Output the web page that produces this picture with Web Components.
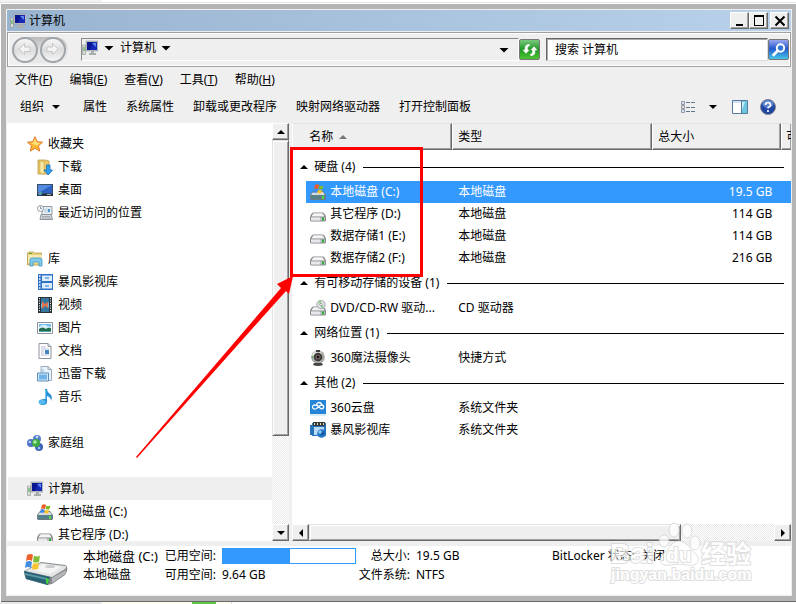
<!DOCTYPE html>
<html lang="zh-CN">
<head>
<meta charset="utf-8">
<title>计算机</title>
<style>
html,body{margin:0;height:100%}
body{font:12px/16px "Noto Sans","Noto Sans CJK SC",sans-serif;color:#000;background:#fff;overflow:hidden}
</style>
</head>
<body>
<desktop-page></desktop-page>
<script>
const define=(name,html,init)=>{
  const t=document.createElement('template');
  t.innerHTML='<style>*{box-sizing:border-box}button{font:inherit;color:inherit;border:0;padding:0;margin:0;background:none;white-space:nowrap}</style>'+html;
  customElements.define(name,class extends HTMLElement{
    constructor(){super();this.attachShadow({mode:'open'}).append(t.content.cloneNode(true));}
    connectedCallback(){if(init&&!this.ready){this.ready=true;init(this,this.shadowRoot);}}
  });
};

const DRIVE='<path d="M3.500 6.500h9q1.500 0 2.500 2l1 2v4l-1 1H1l-1-1v-4l1-2q1-2 2.500-2z" fill="#8b8b8f"/><path d="M4 7.300h8q1 0 2.500 3.200h-13Q3 7.300 4 7.300z" fill="#f4f4f6"/><path d="M1 11.500h14v3H1z" fill="#c3c4ca"/><path d="M1 11.500h9v3H1z" fill="#e6e8eb"/><path d="M12 11.500h2v3h-2z" fill="#2fae35"/>';
const FLAG='<path d="M5 1q2-1.500 4 0L8 5Q6 4 4 5z" fill="#ee5a24"/><path d="M9.500 1.500q2 1 4 0L12.500 5q-2 1-4 0z" fill="#7cbc2c"/><path d="M3.700 5.500q2-1 4 0L6.800 9q-2-1-4 0z" fill="#3f8be6"/><path d="M8.200 5.800q2 1 4 0L11.300 9q-2 1-4 0z" fill="#fcc32a"/>';
const ICONS={
computer:'<path d="M.500 5h3v9.500h-3z" fill="#d8dad8" stroke="#8c9090" stroke-width=".6"/><path d="M2 7v4" stroke="#39a83b"/><path d="M4 1h12v10H4z" fill="#c4c8ca" stroke="#8d9295" stroke-width=".6"/><path d="M5 2h10v8H5z" fill="#1528b8"/><path d="M5 2h6l-3 8H5z" fill="#0a1690"/><path d="M10 3h4v4z" fill="#6189ea"/><path d="M9 11h3v2h2v2H7v-2h2z" fill="#a9aead"/>',
star:'<path d="M8 .7l2.200 5 5.300.5-4 3.600 1.200 5.300L8 12.300 3.300 15.100l1.200-5.300-4-3.600 5.300-.5z" fill="#ffb733" stroke="#e0792b"/><path d="M8 2.500l1.500 4 3.800.4-3 2.400L8 9 4 7l2.500-.5z" fill="#ffe27b"/>',
download:'<path d="M1 1h7l4 1v13H1z" fill="#e9c866" stroke="#b8923d" stroke-width=".7"/><path d="M3 1.500l4 2v12l-4-2z" fill="#f9e9a6" stroke="#c9a64d" stroke-width=".6"/><path d="M9.500 6h3.500v5h2.500L11.200 16 7 11h2.500z" fill="#31a0ef" stroke="#1669b4" stroke-width=".8"/>',
desktop:'<path d="M0 2h16v12H0z" fill="#3a4d66"/><path d="M1 3h14v8H1z" fill="#2b62c4"/><path d="M1 3h14L3 10H1z" fill="#528be0"/><path d="M0 12h16v2H0z" fill="#26303e"/><circle cx="3" cy="11.500" r="2" fill="#3e9ae0"/><path d="M2 10.500h1v1H2z" fill="#f35325"/><path d="M3 10.500h1v1H3z" fill="#81bc06"/><path d="M10 12.500h4" stroke="#9daab8"/>',
recent:'<path d="M5 1.500h10v8H5z" fill="#e9eef4" stroke="#929aa4"/><path d="M7 3.500h6v4H7z" fill="#c8dcec"/><path d="M11 4h2v3h-2z" fill="#4a96cc"/><path d="M4 9.500h10l1.500 5H3z" fill="#d6d9dc" stroke="#8d949b"/><path d="M5 11.500h8M5 13h9" stroke="#a5acb3"/><circle cx="3.500" cy="3.500" r="3" fill="#fafafa" stroke="#969ca3"/><path d="M3.500 1.500v2h1.500" fill="none" stroke="#56789a" stroke-width=".8"/>',
library:'<path d="M.5 2l1-1h5l1 1h7v12H.5z" fill="#e9d27c" stroke="#b79b4b" stroke-width=".8"/><path d="M1 4h14v8H1z" fill="#f7eab1"/><path d="M2 2.500h3" stroke="#58a832"/><path d="M3 15V9q0-2 2-2h8q2 0 2 2v6h-3v-4H6v4z" fill="#80cbed" stroke="#3f95c5" stroke-width=".8"/>',
film:'<path d="M1 0h15v16H1z" fill="#2f70c8"/><path d="M5 1.500h10V7H5zM5 9h10v5.500H5z" fill="#deedfa"/><path d="M2 2h1.500M2 5h1.500M2 8h1.500M2 11h1.500M2 14h1.500" stroke="#fff" stroke-width="1.300"/><path d="M8 3h4v2H8zM8 11h4v2H8z" fill="#7eb4e9"/>',
video:'<path d="M1 0h14v16H1z" fill="#293036"/><path d="M4 1h8v14H4z" fill="#72bce8"/><path d="M4 1h8v4L8 8l4 3v4H4v-4l3-2-3-3z" fill="#36759e"/><path d="M5 4l3 3 3-2v6L8 9l-3 3z" fill="#de7550"/><path d="M2.500 1v14M13.500 1v14" stroke="#dce5e7" stroke-dasharray="1.200 1.200"/>',
picture:'<path d="M.5 2.500h15v11H.5z" fill="#fff" stroke="#8b9299"/><path d="M2 4h12v8H2z" fill="#74bceb"/><path d="M2 7q5-4 8-1l4 1v3H2z" fill="#d7eefa"/><path d="M2 9q3-3 7 0 2-2 5-1v4H2z" fill="#256e4b"/><path d="M2 11h12v1H2z" fill="#50a1af"/>',
document:'<path d="M2 .5h9l3 3v12H2z" fill="#fff" stroke="#8e969e"/><path d="M11 .5v3h3" fill="#dbe2e8" stroke="#8e969e"/><path d="M4 4h5M4 6h8M4 8h3M4 10h3M4 12h8" stroke="#a3b1d4" stroke-width=".8"/><path d="M8 7h4v4H8z" fill="#4386c2"/>',
thunder:'<path d="M4 .5h7l3.500 3v11H4z" fill="#e9f2fb" stroke="#9aacbd"/><path d="M11 .5v3h3.500" fill="none" stroke="#9aacbd"/><path d="M.5 7h11v8H.5z" fill="#d7eafa" stroke="#5a8db9"/><path d="M2 8.500h8v5H2z" fill="#6eb3e8"/><path d="M6 3v4" stroke="#85b3db"/>',
music:'<path d="M8 0h2q0 3 3 5 3 2 1 7 0-4-4-5v6q0 3-4 3-4 0-4-3 0-3 6-3z" fill="#2590d5"/><ellipse cx="5" cy="13" rx="3.500" ry="2.300" fill="#56baf0"/><path d="M8.700 1v9" stroke="#7acff7"/>',
home:'<circle cx="10" cy="4" r="4" fill="#5680cc"/><circle cx="4" cy="8" r="4" fill="#4e72c4"/><circle cx="12" cy="12" r="4" fill="#3c65b8"/><circle cx="9" cy="8" r="4" fill="#3fac43"/><circle cx="8" cy="7" r="1.700" fill="#b2eaa8"/><circle cx="2.800" cy="7" r="1.300" fill="#b8d0f6"/><circle cx="10" cy="2" r="1.300" fill="#c3dafa"/><circle cx="12" cy="13" r="1.300" fill="#9abef1"/>',
windrive:'<path d="M3 7h10l3 4v4l-1 1H1l-1-1v-4z" fill="#6d7a80"/><path d="M3 8h10l2 3H1z" fill="#d5dcdf"/><path d="M1 11.500h14V15H1z" fill="#53828c"/><path d="M12 12h2v3h-2z" fill="#4cdc3f"/>'+FLAG,
drive:DRIVE,
optical:DRIVE+'<circle cx="11" cy="4.500" r="4.200" fill="#dce2e1" stroke="#8d9292" stroke-width=".7"/><path d="M11 4.500L8 2q1-1.500 3-1.500zM11 4.500l3 2.500q-1 1-3 1z" fill="#8bd58c"/><circle cx="11" cy="4.500" r="1.200" fill="#fff" stroke="#777" stroke-width=".6"/>',
camera:'<circle cx="8" cy="7" r="6.800" fill="#a6a8a4"/><circle cx="7" cy="5" r="4.800" fill="#dddeda"/><circle cx="8" cy="7" r="4.300" fill="#3b3938"/><circle cx="8" cy="7" r="2.500" fill="#7b6767"/><circle cx="8" cy="7" r="1.400" fill="#171717"/><path d="M6 0h4v2H6z" fill="#40403d"/><path d="M1.500 7h2" stroke="#44aa43" stroke-width="1.500"/><path d="M4 13h8l1 2q-5 2-10 0z" fill="#464542"/>',
cloud:'<path d="M0 0h16v16H0z" fill="#2785d7"/><path d="M0 14h16v2H0z" fill="#dcecf7"/><path d="M12 4.500Q10 1.500 7.500 3 6 4 7.500 5.500L10 8q2 1.500 3.300 0Q14.500 5.500 12 5q-1.500 0-3 1.500L6.500 8.500Q4 10 2.700 8 2 5.500 4.500 4.800q1.200 0 2 .9" fill="none" stroke="#fff" stroke-width="1.300"/>',
filmball:'<path d="M0 3h3v10H0z" fill="#2774b9"/><path d="M2 1h14v13H2z" fill="#2774b9"/><path d="M3 0h12v4H3z" fill="#333b3f"/><path d="M4 1h1v2H4zM7 1h1v2H7zM10 1h1v2h-1zM13 1h1v2h-1z" fill="#f2d9b0"/><path d="M4 5h10v8H4z" fill="#b8daf3"/><circle cx="11.500" cy="11.500" r="4.300" fill="#2278c6"/><circle cx="10" cy="10" r="1.700" fill="#8ccbf3"/><path d="M10 14l3-5 2 3z" fill="#1755a1"/>',
back:'<path d="M7.500 1.500L2 7l5.500 5.500v-3H13V5H7.500z" fill="#f3f3f3" stroke="#c7c7c7"/>',
forward:'<path d="M7.500 1.500L13 7l-5.500 5.500v-3H2V5h5.500z" fill="#f3f3f3" stroke="#c7c7c7"/>',
refresh:'<path d="M4 12L0 7.500h2.500V6q0-4 5-4.500l1 2.500Q6 4 6 6v1.500h2z" fill="#f7fff5" stroke="#278c2a" stroke-width=".5"/><path d="M12 4L8 8.500h2V10q0 2-2.500 2l1 2.500q5-.5 5-4.500V8.500H16z" fill="#f7fff5" stroke="#278c2a" stroke-width=".5"/>',
search:'<circle cx="9.500" cy="6" r="3.700" fill="#3177d5" stroke="#fff" stroke-width="2"/><path d="M6.700 8.800L2.500 13" stroke="#fff" stroke-width="2.700" stroke-linecap="round"/>',
list:'<path d="M1.500 2.500h3v3h-3zM1.500 6.500h3v3h-3zM1.500 10.500h3v3h-3z" fill="#fff" stroke="#8c9aaa"/><path d="M2.500 4h1M2.500 12h1" stroke="#568bb8"/><path d="M2.500 8h1" stroke="#d54b32"/><path d="M6 3.500h4m1 0h4M6 8.500h4m1 0h4M6 12.500h4m1 0h4" stroke="#66768b"/>',
preview:'<path d="M.5 1.500h15v13H.5z" fill="#fff" stroke="#557a9e"/><path d="M1 2h14v2H1z" fill="#d4e3ef"/><path d="M9.500 2v12" stroke="#557a9e"/><path d="M10 2h5v12h-5z" fill="#6cc5df"/><path d="M10 3l3 0-3 8z" fill="#c2eef4"/>',
help:'<circle cx="8" cy="8" r="7.500" fill="#1e459f" stroke="#81858e"/><ellipse cx="8" cy="5" rx="5.500" ry="4" fill="#5b83d5"/><path d="M5.500 6q0-2.500 2.500-2.500T10.500 6q0 1-1.200 1.800Q8 8.500 8 9.500" fill="none" stroke="#fff" stroke-width="1.700"/><circle cx="8" cy="12" r="1.100" fill="#fff"/>',
down:'<path d="M3.500 6h9L8 10.500z"/>',
smalldown:'<path d="M4 6h8l-4 4z"/>',
up:'<path d="M4 10h8L8 6z"/>',left:'<path d="M10 4v8L6 8z"/>',right:'<path d="M6 4v8l4-4z"/>',
sort:'<path d="M4 10h8L8 6z" fill="#777"/>',
min:'<path d="M4 11h7v2H4z"/>',
max:'<path d="M3 2h10v11H3zM4 4v8h8V4z" fill-rule="evenodd"/>',
close:'<path d="M3.500 3.500l9 9M12.500 3.500l-9 9" stroke="#000" stroke-width="2"/>',
bigdrive:'<path d="M0 18l17-9 24 3q3 1 2 6l-2 4-13 9-5 1L2 26q-2-4-2-8z" fill="#85898b"/><path d="M1 18l16-8 24 3q2 1 0 3L28 24z" fill="#e3e5e6"/><path d="M9 17l10-6 18 3-11 7z" fill="#f5f5f5"/><ellipse cx="26" cy="13.500" rx="5" ry="1.500" fill="#cacdce"/><path d="M0 18l26 6-2 8-22-6z" fill="#286275"/><path d="M1 20l22 5v2L1 22z" fill="#5b96a4"/><path d="M22 25l3 1-1 5-2-1z" fill="#45d238"/><path d="M28 25l14-8-1 4-13 9z" fill="#b4b8ba"/><path d="M3 2q4-2 6 0L8 8q-3-2-6 0z" fill="#ed622b"/><path d="M10 2.500q3 2 6 0L15 9q-3 1-6 0z" fill="#82bd37"/><path d="M2 9q3-2 6 0l-1 6q-3-2-6 0z" fill="#438ee3"/><path d="M9 10q3 1 6 0l-1 6q-3 1-6 0z" fill="#fac331"/>'
};
define('ui-icon','<style>:host{display:block;flex:none;width:16px;height:16px}svg{display:block;width:100%;height:100%}:host([name=bigdrive]){width:44px;height:34px}</style>',
(h,r)=>{const n=h.getAttribute('name');r.innerHTML+=`<svg aria-hidden="true" viewBox="${n==='bigdrive'?'0 0 44 34':'0 0 16 16'}">${ICONS[n]}</svg>`;});

define('bevel-button','<style>:host{display:block;flex:none;width:17px;height:17px}button{display:grid;place-items:center;overflow:hidden;width:100%;height:100%;background:#efefef;border:1px solid;border-color:#fff #696969 #696969 #fff;box-shadow:inset -1px -1px #a0a0a0}</style><button><slot></slot></button>',
(h,r)=>r.querySelector('button').setAttribute('aria-label',h.getAttribute('label')));

define('title-bar',`<style>:host{display:flex;align-items:center;height:21px;padding:0 2px 0 3px;gap:3px;background:linear-gradient(90deg,#99b4d1,#b9d1ea)}
h1{font:inherit;margin:0;flex:1}nav{display:flex}bevel-button{width:19px}bevel-button:last-child{margin-left:2px}</style>
<ui-icon name="computer"></ui-icon><h1>计算机</h1><nav><bevel-button label="最小化"><ui-icon name="min"></ui-icon></bevel-button><bevel-button label="最大化"><ui-icon name="max"></ui-icon></bevel-button><bevel-button label="关闭"><ui-icon name="close"></ui-icon></bevel-button></nav>`);

define('address-bar',`<style>:host{display:flex;align-items:center;height:35px;margin-top:1px;padding:0 1px 0 4px;border:1px solid #a0a0a0;box-shadow:inset 1px 1px #fff,inset -1px -1px #fff}
.nav{display:flex;gap:2px;padding-right:2px;border-radius:14px;background:linear-gradient(#bbb,#e8e8e8 60%)}
.nav button{width:26px;height:26px;display:grid;place-items:center;border-radius:50%;border:2px solid #a0a5aa;background:linear-gradient(#f7f7f7,#dcdcdc 50%,#f5f5f5)}
.path,.find{display:flex;align-items:center;height:23px;border:1px solid;border-color:#8a8a8a #fff #fff #8a8a8a}
.path{flex:1;margin-left:13px;padding:0 6px 0 0}.path button{display:flex;align-items:center;gap:2px;padding-bottom:4px}.path button+button{margin-left:3px}.end{margin-left:auto!important;padding:0!important}
.tool{display:grid;place-items:center;flex:none;width:21px;height:21px;border:1px solid #777;border-radius:2px}
.go{background:linear-gradient(#7bc87f,#1e9b23 50%,#4dc430)}.look{background:linear-gradient(#9ca8ee,#245acf 45%,#42c6e9)}
.find{flex:0 0 222px;margin:0 0 0 6px;background:#fff;border-color:#666 #ddd #ddd #666;box-shadow:inset 1px 1px #aaa}
input{font:inherit;width:100%;border:0;outline:0;background:none;padding:0 8px}</style>
<div class="nav"><button aria-label="后退"><ui-icon name="back"></ui-icon></button><button aria-label="前进"><ui-icon name="forward"></ui-icon></button></div>
<div class="path"><button aria-label="位置"><ui-icon name="computer"></ui-icon></button><button aria-label="展开"><ui-icon name="down"></ui-icon></button><button>计算机<ui-icon name="down"></ui-icon></button><button class="end" aria-label="历史"><ui-icon name="down"></ui-icon></button></div>
<button class="tool go" aria-label="刷新"><ui-icon name="refresh"></ui-icon></button>
<div class="find"><input aria-label="搜索" value="搜索 计算机"></div><button class="tool look" aria-label="开始搜索"><ui-icon name="search"></ui-icon></button>`);

define('menu-bar',`<style>:host{display:flex;align-items:center;height:26px;padding:0 8px;gap:17px}</style>
<button>文件(<u>F</u>)</button><button>编辑(<u>E</u>)</button><button>查看(<u>V</u>)</button><button>工具(<u>T</u>)</button><button>帮助(<u>H</u>)</button>`);

define('command-bar',`<style>:host{display:flex;align-items:center;height:30px;padding:0 15px 3px 13px;gap:19px}button{display:flex;align-items:center;gap:4px}.view{margin-left:auto;gap:9px}.view+button{margin-left:-8px}button:last-child{margin-left:-7px}</style>
<button>组织<ui-icon name="smalldown"></ui-icon></button><button>属性</button><button>系统属性</button><button>卸载或更改程序</button><button>映射网络驱动器</button><button>打开控制面板</button>
<button class="view" aria-label="更改视图"><ui-icon name="list"></ui-icon><ui-icon name="smalldown"></ui-icon></button><button aria-label="预览窗格"><ui-icon name="preview"></ui-icon></button><button aria-label="帮助"><ui-icon name="help"></ui-icon></button>`);

define('scroll-bar',`<style>:host{display:flex;flex:none;flex-direction:column;width:17px;background:repeating-conic-gradient(#fff 0 25%,#e9e9e9 0 50%) 0 0/2px 2px}
:host([horizontal]){flex-direction:row;width:auto;height:17px}.space{flex:1;display:flex;flex-direction:inherit;min-height:0}
.thumb{background:#efefef;border:1px solid;border-color:#e3e3e3 #696969 #696969 #e3e3e3;box-shadow:inset 1px 1px #fff,inset -1px -1px #a0a0a0;flex:0 0 var(--part)}</style>
<bevel-button><ui-icon></ui-icon></bevel-button><div class="space"><div class="thumb"></div></div><bevel-button><ui-icon></ui-icon></bevel-button>`,
(h,r)=>{const z=h.hasAttribute('horizontal');const n=z?['left','right']:['up','smalldown'];const l=z?['向左','向右']:['向上','向下'];
r.querySelectorAll('bevel-button').forEach((b,i)=>{const c=document.createElement('ui-icon');c.setAttribute('name',n[i]);b.shadowRoot.querySelector('button').setAttribute('aria-label',l[i]);b.replaceChildren(c);});});

define('nav-item',`<style>:host{display:block}a{display:flex;align-items:center;height:23px;gap:5px;padding-left:19px;margin-left:1px;color:inherit;text-decoration:none;white-space:nowrap}
:host([child]) a{padding-left:29px}:host([last]){margin-bottom:23px}:host([current]) a{background:#efefef}</style><a href="#"><ui-icon></ui-icon><slot></slot></a>`,
(h,r)=>{const c=document.createElement('ui-icon');c.setAttribute('name',h.getAttribute('icon'));r.querySelector('ui-icon').replaceWith(c);});

define('nav-pane',`<style>:host{display:flex;flex:none;width:36%;min-height:0;background:#fff}nav{flex:1;padding-top:9px;overflow:hidden}scroll-bar{--part:77%}</style>
<nav><nav-item icon="star">收藏夹</nav-item><nav-item child icon="download">下载</nav-item><nav-item child icon="desktop">桌面</nav-item><nav-item child last icon="recent">最近访问的位置</nav-item>
<nav-item icon="library">库</nav-item><nav-item child icon="film">暴风影视库</nav-item><nav-item child icon="video">视频</nav-item><nav-item child icon="picture">图片</nav-item><nav-item child icon="document">文档</nav-item><nav-item child icon="thunder">迅雷下载</nav-item><nav-item child last icon="music">音乐</nav-item>
<nav-item last icon="home">家庭组</nav-item><nav-item current icon="computer">计算机</nav-item><nav-item child icon="windrive">本地磁盘 (C:)</nav-item><nav-item child icon="drive">其它程序 (D:)</nav-item></nav><scroll-bar></scroll-bar>`);

const GROUPS=[
['硬盘 (4)',['windrive','本地磁盘 (C:)','本地磁盘','19.5 GB'],['drive','其它程序 (D:)','本地磁盘','114 GB'],['drive','数据存储1 (E:)','本地磁盘','114 GB'],['drive','数据存储2 (F:)','本地磁盘','216 GB']],
['有可移动存储的设备 (1)',['optical','DVD/CD-RW 驱动...','CD 驱动器','']],
['网络位置 (1)',['camera','360魔法摄像头','快捷方式','']],
['其他 (2)',['cloud','360云盘','系统文件夹',''],['filmball','暴风影视库','系统文件夹','']]];
define('file-list',`<style>:host{display:flex;flex-direction:column;flex:1;min-width:0;background:#fff}.view{flex:1;min-height:0;overflow:hidden}
table{width:100%;table-layout:fixed;border-collapse:separate;border-spacing:0}td,th{padding:0;font-weight:400;text-align:left;white-space:nowrap;overflow:hidden}
th{height:27px;padding-left:5px;background:#efefef;border:1px solid;border-color:#e3e3e3 #696969 #696969 #fff;box-shadow:inset -1px -1px #a0a0a0}
th:first-child{padding-left:16px}th:last-child{border-right:0;padding-left:4px}th div{display:flex;align-items:center;gap:2px}
tbody td{height:22px}tbody:first-of-type:before{content:"";display:table-row;height:3px}
.group td{height:28px}.group div{display:flex;align-items:center;padding:0 7px 0 4px;gap:2px}.group i{flex:1;height:1px;margin-left:6px;background:#000}
.name{display:flex;align-items:center;gap:4px;padding-left:4px}.type{padding-left:6px}.size{text-align:right;padding-right:9px}
.on td:not(:first-child){background:#3399ff;color:#fff}scroll-bar{--part:80%}</style>
<div class="view"><table><colgroup><col style="width:14px"><col style="width:146px"><col style="width:200px"><col style="width:129px"><col></colgroup>
<thead><tr><th colspan="2"><div>名称<ui-icon name="sort"></ui-icon></div></th><th>类型</th><th>总大小</th><th>可</th></tr></thead></table></div><scroll-bar horizontal></scroll-bar>`,
(h,r)=>{r.querySelector('table').insertAdjacentHTML('beforeend',GROUPS.map(([g,...rows],a)=>`<tbody><tr class="group"><td colspan="5"><div><ui-icon name="up"></ui-icon>${g}<i></i></div></td></tr>`+
rows.map((x,b)=>`<tr${a+b?'':' class="on"'}><td></td><td><div class="name"><ui-icon name="${x[0]}"></ui-icon>${x[1]}</div></td><td class="type">${x[2]}</td><td class="size">${x[3]}</td><td></td></tr>`).join('')+'</tbody>').join(''));});

define('details-pane',`<style>:host{display:flex;flex:none;height:49px;padding-left:17px;gap:15px;background:#fff}ui-icon{margin-top:7px}
.grid{display:grid;grid-template-columns:77px 50px 134px 48px 130px auto auto;grid-auto-rows:19px;column-gap:6px;align-content:start;align-items:center;white-space:nowrap}
.k{justify-self:end}.n{font-size:13px}progress{appearance:none;display:block;width:100%;height:16px;border:1px solid #3399ff;background:#fff}
progress::-webkit-progress-bar{background:#fff}progress::-webkit-progress-value{background:#3399ff}</style>
<ui-icon name="bigdrive"></ui-icon><div class="grid"><span class="n">本地磁盘 (C:)</span><label class="k" for="used">已用空间:</label><progress id="used" max="100" value="51"></progress><span class="k">总大小:</span><span>19.5 GB</span><span>BitLocker 状态:</span><span>关闭</span>
<span>本地磁盘</span><span class="k">可用空间:</span><span>9.64 GB</span><span class="k">文件系统:</span><span>NTFS</span></div>`);

define('water-mark',`<style>:host{position:absolute;right:44px;bottom:16px;width:142px;height:68px;opacity:.75;pointer-events:none}svg{display:block;width:100%;height:100%;overflow:visible}
text{font-family:"Liberation Sans","Noto Sans CJK SC",sans-serif;font-weight:700;fill:#fff;stroke:#d4d4d4;stroke-width:2px;paint-order:stroke;stroke-linejoin:round}</style>
<svg viewBox="0 0 142 68"><g fill="#fff" stroke="#d4d4d4"><ellipse cx="54" cy="21" rx="5" ry="6"/><ellipse cx="64" cy="10" rx="5" ry="7"/><ellipse cx="77" cy="11" rx="5" ry="7"/><ellipse cx="85" cy="23" rx="5" ry="7"/><path d="M69 21c8 0 10 8 16 12 7 7 2 14-7 12q-9-2-18 0c-10 2-13-5-6-12 6-4 7-12 15-12z"/></g>
<text x="0" y="43" font-size="28">Bai</text><text x="56" y="42" font-size="21">du</text><text x="91" y="43" font-size="25">经验</text><text x="1" y="60" font-size="16">jingyan.baidu.com</text></svg>`);

define('red-mark',`<style>:host{position:absolute;left:0;top:0;width:796px;height:604px;pointer-events:none}svg{display:block}</style>
<svg width="796" height="604"><path d="M291.500 148.500h130v127h-130z" fill="none" stroke="red" stroke-width="3"/><path d="M136 457L281 288l-4-4 16-8-4 18-3-3L137 458z" fill="red"/></svg>`);

define('explorer-window',`<style>:host{display:flex;flex-direction:column;flex:1;min-height:0;margin-left:1px;padding:5px 4px 5px 5px;background:#b4b4b4;border-bottom:1px solid #696969}
section{display:flex;flex-direction:column;flex:1;min-height:0;border:1px solid #efefef;background:#efefef}main{display:flex;flex:1;min-height:0;gap:3px;margin-bottom:5px}</style>
<section><title-bar></title-bar><address-bar></address-bar><menu-bar></menu-bar><command-bar></command-bar><main><nav-pane></nav-pane><file-list></file-list></main><details-pane></details-pane></section>`);

define('desktop-page',`<style>:host{position:relative;display:flex;flex-direction:column;height:100vh;overflow:hidden}
.top{height:4px;border-bottom:1px solid #fff;background:linear-gradient(#e2e2e2,#e2e2e2) 0 2px/100% 1px no-repeat,linear-gradient(90deg,#f2f2f2 102px,#fff 102px)}
.bottom{height:2px;background:linear-gradient(90deg,#e8e8e8 102px,#fffff0 102px 192px,#5bc846 192px 216px,#fffff0 216px 231px,#ddd 231px 232px,#fff 232px)}</style>
<div class="top"></div><explorer-window></explorer-window><div class="bottom"></div><water-mark></water-mark><red-mark></red-mark>`);
</script>
</body>
</html>
